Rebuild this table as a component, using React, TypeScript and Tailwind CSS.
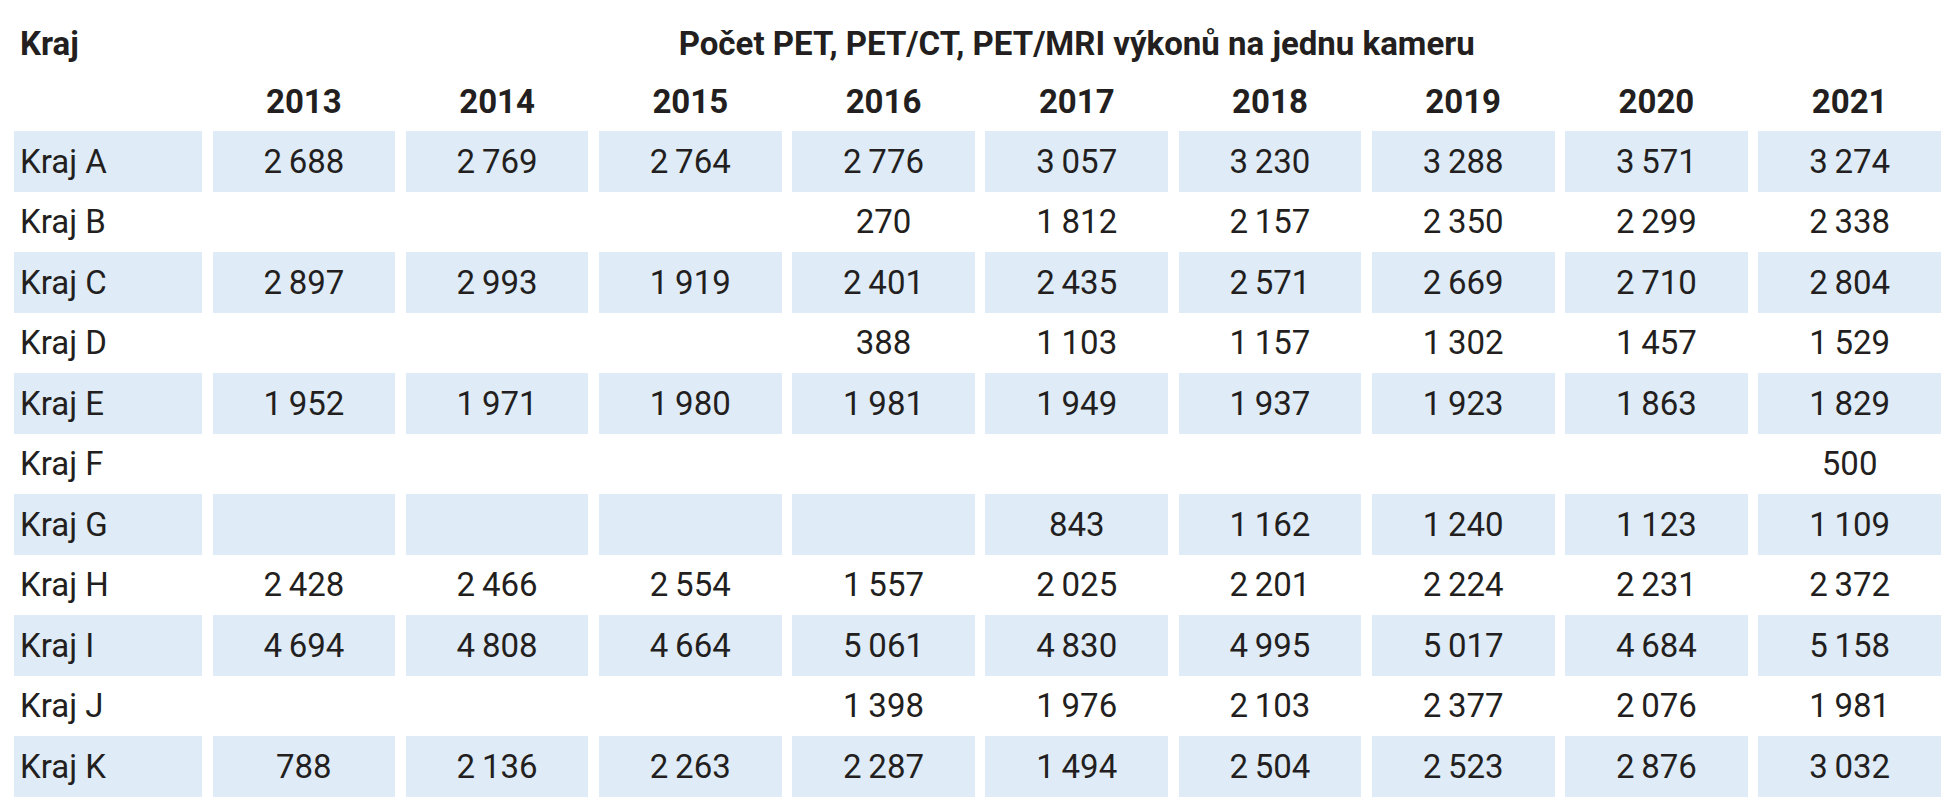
const years = ["2013", "2014", "2015", "2016", "2017", "2018", "2019", "2020", "2021"];

const rows: { name: string; values: (number | null)[] }[] = [
  { name: "Kraj A", values: [2688, 2769, 2764, 2776, 3057, 3230, 3288, 3571, 3274] },
  { name: "Kraj B", values: [null, null, null, 270, 1812, 2157, 2350, 2299, 2338] },
  { name: "Kraj C", values: [2897, 2993, 1919, 2401, 2435, 2571, 2669, 2710, 2804] },
  { name: "Kraj D", values: [null, null, null, 388, 1103, 1157, 1302, 1457, 1529] },
  { name: "Kraj E", values: [1952, 1971, 1980, 1981, 1949, 1937, 1923, 1863, 1829] },
  { name: "Kraj F", values: [null, null, null, null, null, null, null, null, 500] },
  { name: "Kraj G", values: [null, null, null, null, 843, 1162, 1240, 1123, 1109] },
  { name: "Kraj H", values: [2428, 2466, 2554, 1557, 2025, 2201, 2224, 2231, 2372] },
  { name: "Kraj I", values: [4694, 4808, 4664, 5061, 4830, 4995, 5017, 4684, 5158] },
  { name: "Kraj J", values: [null, null, null, 1398, 1976, 2103, 2377, 2076, 1981] },
  { name: "Kraj K", values: [788, 2136, 2263, 2287, 1494, 2504, 2523, 2876, 3032] },
];

// thousands separated by a thin space, like the printed table
const fmt = (n: number | null) => {
  if (n === null) return "";
  const s = String(n);
  return s.length > 3 ? s.slice(0, -3) + "\u2009" + s.slice(-3) : s;
};

export default function App() {
  return (
    <div className="w-[1946px] h-[800px] bg-white text-[#231f20] font-['Roboto',sans-serif] text-[33px] overflow-hidden">
      <div className="ml-[14px] w-[1927px] grid grid-cols-[188px_repeat(9,1fr)] gap-x-[10.5px]">
        {/* Header */}
        <div className="h-[75px] pl-[6px] pt-[27px] font-bold leading-none">Kraj</div>
        <div className="col-span-9 h-[75px] pt-[27px] font-bold leading-none text-center">
          Počet PET, PET/CT, PET/MRI výkonů na jednu kameru
        </div>
        <div className="h-[56px]" />
        {years.map((y) => (
          <div key={y} className="h-[56px] pt-[10px] font-bold leading-none text-center">
            {y}
          </div>
        ))}

        {/* Body */}
        {rows.map((r, i) => {
          const bg = i % 2 === 0 ? "bg-[#dfebf7]" : "bg-white";
          return [
            <div key={r.name} className={`h-[60.5px] flex items-center pl-[6px] ${bg}`}>
              {r.name}
            </div>,
            ...r.values.map((v, j) => (
              <div key={r.name + j} className={`h-[60.5px] flex items-center justify-center ${bg}`}>
                {fmt(v)}
              </div>
            )),
          ];
        })}
      </div>
    </div>
  );
}
